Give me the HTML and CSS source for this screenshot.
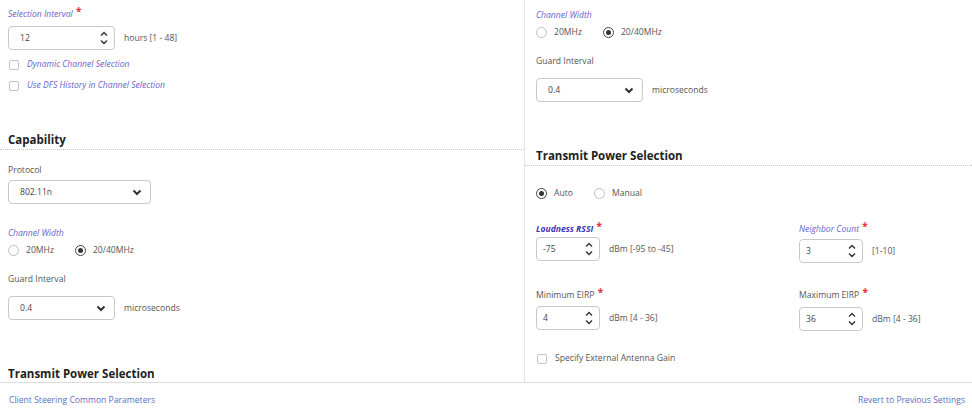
FILE: index.html
```html
<!DOCTYPE html>
<html>
<head>
  <meta charset="UTF-8">
  <title>Radio Settings</title>
  <link rel="stylesheet" href="styles.css">
</head>
<body>
  <div class="page">
    <div class="panes">

      <!-- Left pane -->
      <section class="pane pane-left">
        <label class="field-label hint">Selection Interval <span class="req">*</span></label>
        <div class="input-row mt-7">
          <div class="spinner w-107"><span>12</span>
            <svg class="spin-icon" width="10" height="18" viewBox="0 0 10 18"><path d="M2 6.5 L5 3.5 L8 6.5 M2 11.5 L5 14.5 L8 11.5" /></svg>
          </div>
          <span class="unit">hours [1 - 48]</span>
        </div>
        <div class="check mt-7"><span class="box"></span><span class="hint">Dynamic Channel Selection</span></div>
        <div class="check mt-6"><span class="box"></span><span class="hint">Use DFS History in Channel Selection</span></div>

        <h2 class="section-title mt-38">Capability</h2>

        <label class="field-label mt-13">Protocol</label>
        <div class="input-row mt-2">
          <div class="select w-143"><span>802.11n</span>
            <svg class="chev" width="10" height="7" viewBox="0 0 10 7"><path d="M1.5 1.5 L5 5 L8.5 1.5" /></svg>
          </div>
        </div>

        <label class="field-label hint mt-22">Channel Width</label>
        <div class="radios mt-2">
          <span class="radio"><span class="dot"></span>20MHz</span>
          <span class="radio on"><span class="dot"></span>20/40MHz</span>
        </div>

        <label class="field-label mt-14">Guard Interval</label>
        <div class="input-row mt-9">
          <div class="select w-107"><span>0.4</span>
            <svg class="chev" width="10" height="7" viewBox="0 0 10 7"><path d="M1.5 1.5 L5 5 L8.5 1.5" /></svg>
          </div>
          <span class="unit">microseconds</span>
        </div>

        <h2 class="section-title mt-45">Transmit Power Selection</h2>
      </section>

      <!-- Right pane -->
      <section class="pane pane-right">
        <label class="field-label hint">Channel Width</label>
        <div class="radios mt-2">
          <span class="radio"><span class="dot"></span>20MHz</span>
          <span class="radio on"><span class="dot"></span>20/40MHz</span>
        </div>

        <label class="field-label mt-14">Guard Interval</label>
        <div class="input-row mt-9">
          <div class="select w-107"><span>0.4</span>
            <svg class="chev" width="10" height="7" viewBox="0 0 10 7"><path d="M1.5 1.5 L5 5 L8.5 1.5" /></svg>
          </div>
          <span class="unit">microseconds</span>
        </div>

        <h2 class="section-title mt-45">Transmit Power Selection</h2>

        <div class="radios mt-20">
          <span class="radio on"><span class="dot"></span>Auto</span>
          <span class="radio"><span class="dot"></span>Manual</span>
        </div>

        <div class="power-grid mt-18">
          <div class="power-field">
            <label class="field-label hint strong">Loudness RSSI <span class="req">*</span></label>
            <div class="input-row mt-3">
              <div class="spinner w-63"><span>-75</span>
                <svg class="spin-icon" width="10" height="18" viewBox="0 0 10 18"><path d="M2 6.5 L5 3.5 L8 6.5 M2 11.5 L5 14.5 L8 11.5" /></svg>
              </div>
              <span class="unit">dBm [-95 to -45]</span>
            </div>
          </div>
          <div class="power-field">
            <label class="field-label hint">Neighbor Count <span class="req">*</span></label>
            <div class="input-row mt-5">
              <div class="spinner w-63"><span>3</span>
                <svg class="spin-icon" width="10" height="18" viewBox="0 0 10 18"><path d="M2 6.5 L5 3.5 L8 6.5 M2 11.5 L5 14.5 L8 11.5" /></svg>
              </div>
              <span class="unit">[1-10]</span>
            </div>
          </div>
          <div class="power-field mt-22">
            <label class="field-label">Minimum EIRP <span class="req">*</span></label>
            <div class="input-row mt-6">
              <div class="spinner w-63"><span>4</span>
                <svg class="spin-icon" width="10" height="18" viewBox="0 0 10 18"><path d="M2 6.5 L5 3.5 L8 6.5 M2 11.5 L5 14.5 L8 11.5" /></svg>
              </div>
              <span class="unit">dBm [4 - 36]</span>
            </div>
          </div>
          <div class="power-field mt-22">
            <label class="field-label">Maximum EIRP <span class="req">*</span></label>
            <div class="input-row mt-7">
              <div class="spinner w-63"><span>36</span>
                <svg class="spin-icon" width="10" height="18" viewBox="0 0 10 18"><path d="M2 6.5 L5 3.5 L8 6.5 M2 11.5 L5 14.5 L8 11.5" /></svg>
              </div>
              <span class="unit">dBm [4 - 36]</span>
            </div>
          </div>
        </div>

        <div class="check mt-20"><span class="box"></span><span>Specify External Antenna Gain</span></div>
      </section>
    </div>

    <!-- Footer links -->
    <footer class="footer">
      <a class="link">Client Steering Common Parameters</a>
      <a class="link">Revert to Previous Settings</a>
    </footer>
  </div>
</body>
</html>
```

FILE: styles.css
```css
/* Global styles */
* {
  margin: 0;
  padding: 0;
  box-sizing: border-box;
}

:root {
  --text-color: #555555;
  --heading-color: #222222;
  --hint-color: #6a62c9;
  --strong-hint: #3f35b8;
  --link-color: #5b6cc2;
  --border-color: #c9c9c9;
  --line-color: #e4e4e4;
  --req-color: #e2323f;
}

body {
  font-family: "Open Sans", "Noto Sans", sans-serif;
  font-size: 8.6px;
  line-height: 15px;
  color: var(--text-color);
  background: #ffffff;
  overflow: hidden;
}

.page {
  width: 972px;
  height: 414px;
  display: flex;
  flex-direction: column;
}

/* Two panes */
.panes {
  display: flex;
  height: 382px;
  overflow: hidden;
}

.pane-left {
  width: 525px;
  padding: 4px 0 0 8px;
  border-right: 1px solid var(--line-color);
}

.pane-right {
  flex: 1;
  padding: 8px 0 0 11px;
}

/* Labels */
.field-label {
  display: block;
  height: 15px;
}

.hint {
  color: var(--hint-color);
  font-style: italic;
}

.hint.strong {
  color: var(--strong-hint);
  font-weight: 700;
}

.req {
  color: var(--req-color);
  font-style: normal;
  font-weight: 700;
  font-size: 10px;
  vertical-align: 2px;
  margin-left: 1px;
}

/* Section headings */
.section-title {
  font-size: 11.5px;
  line-height: 18px;
  font-weight: 700;
  color: var(--heading-color);
  border-bottom: 1px dotted #c4c4c4;
  margin-left: -8px;
  padding-left: 8px;
}

.pane-right .section-title {
  margin-left: -11px;
  padding-left: 11px;
}

/* Inputs */
.input-row {
  display: flex;
  align-items: center;
  gap: 9px;
}

.spinner,
.select {
  height: 24px;
  border: 1px solid var(--border-color);
  border-radius: 4px;
  display: flex;
  align-items: center;
  justify-content: space-between;
  background: #ffffff;
  color: #444;
}

.spinner {
  padding: 0 5px 0 6px;
}

.spinner.w-107 {
  padding-left: 11px;
}

.select {
  padding: 0 8px 0 11px;
}

.spin-icon path {
  fill: none;
  stroke: #333;
  stroke-width: 1.4;
}

.chev path {
  fill: none;
  stroke: #333;
  stroke-width: 2;
}

.w-63 { width: 64px; }
.w-107 { width: 107px; }
.w-143 { width: 143px; }

/* Checkboxes and radios */
.check {
  display: flex;
  align-items: center;
  gap: 8px;
  padding-left: 1px;
}

.box {
  width: 10px;
  height: 10px;
  border: 1px solid #c4c4c4;
  border-radius: 2px;
}

.radios {
  display: flex;
  gap: 21px;
}

.radio {
  display: flex;
  align-items: center;
  gap: 7px;
}

.dot {
  width: 11px;
  height: 11px;
  border: 1px solid #bdbdbd;
  border-radius: 50%;
  display: flex;
  align-items: center;
  justify-content: center;
}

.radio.on .dot {
  border-color: #444;
}

.radio.on .dot::after {
  content: "";
  width: 5px;
  height: 5px;
  border-radius: 50%;
  background: #333;
}

/* Power grid */
.power-grid {
  display: grid;
  grid-template-columns: 263px 1fr;
}

/* Footer */
.footer {
  height: 32px;
  border-top: 1px solid #dcdcdc;
  display: flex;
  justify-content: space-between;
  padding: 10px 7px 0 9px;
}

.link {
  color: var(--link-color);
  cursor: pointer;
}

/* Spacing helpers */
.mt-2 { margin-top: 2px; }
.mt-3 { margin-top: 3px; }
.mt-5 { margin-top: 5px; }
.mt-6 { margin-top: 6px; }
.mt-7 { margin-top: 7px; }
.mt-9 { margin-top: 9px; }
.mt-13 { margin-top: 13px; }
.mt-14 { margin-top: 14px; }
.mt-18 { margin-top: 18px; }
.mt-20 { margin-top: 20px; }
.mt-22 { margin-top: 22px; }
.mt-38 { margin-top: 38px; }
.mt-45 { margin-top: 45px; }
```
